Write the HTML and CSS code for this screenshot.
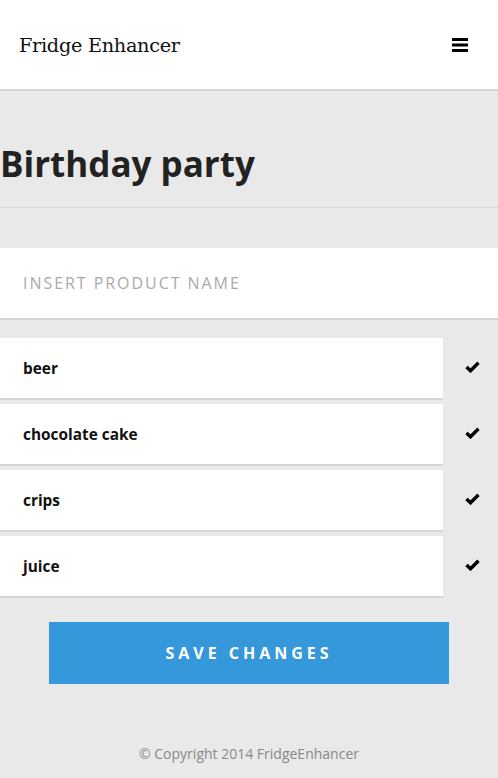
FILE: index.html
```html
<!DOCTYPE html>
<html>
<head>
<meta charset="utf-8">
<link rel="stylesheet" href="styles.css">
</head>
<body>
<header class="topbar">
  <div class="brand">Fridge Enhancer</div>
  <svg class="menu" width="16" height="14" viewBox="0 0 16 14"><rect x="0" y="0" width="16" height="3" fill="#000"/><rect x="0" y="5.5" width="16" height="3" fill="#000"/><rect x="0" y="11" width="16" height="3" fill="#000"/></svg>
</header>
<main>
  <h1 class="title">Birthday party</h1>
  <div class="rule"></div>
  <div class="input-wrap"><input class="product" type="text" placeholder="INSERT PRODUCT NAME"></div>
  <ul class="list">
    <li class="row"><span class="item">beer</span><span class="check"><svg width="15" height="12" viewBox="0 0 15 12"><path d="M1.5 6 L5.5 9.8 L13.5 1.8" fill="none" stroke="#000" stroke-width="3.4"/></svg></span></li>
    <li class="row"><span class="item">chocolate cake</span><span class="check"><svg width="15" height="12" viewBox="0 0 15 12"><path d="M1.5 6 L5.5 9.8 L13.5 1.8" fill="none" stroke="#000" stroke-width="3.4"/></svg></span></li>
    <li class="row"><span class="item">crips</span><span class="check"><svg width="15" height="12" viewBox="0 0 15 12"><path d="M1.5 6 L5.5 9.8 L13.5 1.8" fill="none" stroke="#000" stroke-width="3.4"/></svg></span></li>
    <li class="row"><span class="item">juice</span><span class="check"><svg width="15" height="12" viewBox="0 0 15 12"><path d="M1.5 6 L5.5 9.8 L13.5 1.8" fill="none" stroke="#000" stroke-width="3.4"/></svg></span></li>
  </ul>
  <div class="actions"><button class="save">SAVE CHANGES</button></div>
</main>
<footer class="foot">© Copyright 2014 FridgeEnhancer</footer>
</body>
</html>
```
FILE: styles.css
```css
* { box-sizing: border-box; }
html, body { margin: 0; padding: 0; }
body {
  background: #e9e9e9;
  font-family: "Open Sans", "Noto Sans", sans-serif;
  color: #222;
  width: 498px;
  height: 778px;
  overflow: hidden;
}
.topbar {
  height: 91px;
  background: #fff;
  border-bottom: 2px solid #d6d6d6;
  display: flex;
  align-items: center;
  justify-content: space-between;
  padding: 0 30px 0 19px;
}
.brand {
  font-family: "DejaVu Serif", "Liberation Serif", serif;
  font-size: 19.3px;
  color: #111;
  letter-spacing: -0.3px;
  margin-top: 1px;
}
.menu { display: block; margin-top: 0; }
.title {
  margin: 0;
  padding: 53px 0 0 0;
  font-size: 35px;
  font-weight: 700;
  line-height: 40px;
  color: #222;
  height: 116px;
}
.rule { height: 1px; background: #d8d8d8; }
.input-wrap { margin-top: 40px; }
.product {
  display: block;
  width: 100%;
  height: 72px;
  border: 0;
  border-bottom: 2px solid #d6d6d6;
  background: #fff;
  padding: 0 23px;
  font-family: "Open Sans", sans-serif;
  font-size: 16px;
  letter-spacing: 1.95px;
  color: #333;
  outline: none;
}
.product::placeholder { color: #aaa; }
.list {
  list-style: none;
  margin: 18px 0 0 0;
  padding: 0;
  display: flex;
  flex-direction: column;
  gap: 4px;
}
.row { display: flex; height: 62px; }
.item {
  width: 443px;
  background: #fff;
  border-bottom: 2px solid #d6d6d6;
  display: flex;
  align-items: center;
  padding: 1px 23px 1px;
  font-weight: 700;
  font-size: 15.4px;
  color: #111;
}
.check {
  flex: 1;
  display: flex;
  align-items: center;
  justify-content: center;
  padding-bottom: 5px;
  padding-left: 3px;
}
.check svg { display: block; }
.actions { padding: 24px 49px 0; }
.save {
  display: block;
  width: 400px;
  height: 62px;
  border: 0;
  background: #3598db;
  color: #fff;
  font-family: "Open Sans", sans-serif;
  font-weight: 700;
  font-size: 16px;
  letter-spacing: 4px;
  padding: 0;
}
.foot {
  text-align: center;
  margin-top: 60px;
  font-size: 14px;
  color: #888;
}
```
